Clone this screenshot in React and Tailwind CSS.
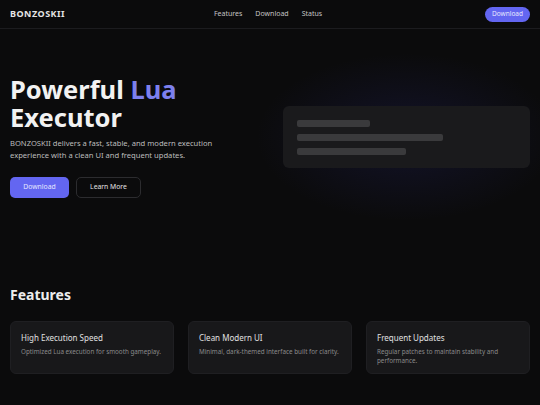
import React from "react";

const features = [
  { title: "High Execution Speed", desc: "Optimized Lua execution for smooth gameplay." },
  { title: "Clean Modern UI", desc: "Minimal, dark-themed interface built for clarity." },
  { title: "Frequent Updates", desc: "Regular patches to maintain stability and performance." },
];

export default function App() {
  return (
    <div className="min-h-[405px] w-[540px] bg-[#0b0b0c] text-white font-['Noto_Sans',sans-serif] antialiased overflow-hidden">
      {/* nav */}
      <header className="h-[29px] flex items-center px-[10px] border-b border-[#1c1c1f]">
        <span className="text-[9px] font-bold tracking-[0.5px] text-[#e5e5e5]">BONZOSKII</span>
        <nav className="flex-1 flex justify-center items-center gap-[13px] text-[7px] text-[#c4c4c4] mr-[14px]">
          <a>Features</a>
          <a>Download</a>
          <a>Status</a>
        </nav>
        <button className="h-[15px] w-[45px] rounded-full bg-[#6366f1] text-[6.5px] text-[#e8e8ff]">
          Download
        </button>
      </header>

      {/* hero */}
      <section className="flex items-center px-[10px] pt-[46px] pb-[86px]">
        <div className="w-[260px] shrink-0">
          <h1 className="text-[25.5px] leading-[28px] font-bold text-[#f2f2f2]">
            Powerful <span className="text-[#7d80ee]">Lua</span>
            <br />
            Executor
          </h1>
          <p className="mt-[6px] text-[7.6px] leading-[12px] text-[#bdbdbd]">
            BONZOSKII delivers a fast, stable, and modern execution
            <br />
            experience with a clean UI and frequent updates.
          </p>
          <div className="mt-[16px] flex gap-[7px]">
            <button className="h-[21px] w-[59px] rounded-[5px] bg-[#6366f1] text-[6.8px] text-[#e6e6ff]">
              Download
            </button>
            <button className="h-[21px] w-[65px] rounded-[5px] border border-[#2c2c2f] text-[6.8px] text-[#e5e5e5]">
              Learn More
            </button>
          </div>
        </div>
        <div className="relative ml-[13px] flex-1">
          <div className="absolute -left-[40px] -right-[40px] -top-[60px] -bottom-[60px] bg-[radial-gradient(ellipse_at_center,rgba(60,60,190,0.16),transparent_65%)]" />
          <div className="relative h-[62px] rounded-[6px] bg-[#1a1a1c] px-[14px] pt-[14px] flex flex-col gap-[7px]">
            <div className="h-[7px] w-[73px] rounded-[2px] bg-[#3a3a3c]" />
            <div className="h-[7px] w-[146px] rounded-[2px] bg-[#3a3a3c]" />
            <div className="h-[7px] w-[109px] rounded-[2px] bg-[#3a3a3c]" />
          </div>
        </div>
      </section>

      {/* features */}
      <section className="px-[10px]">
        <h2 className="text-[14px] font-bold text-[#ededed]">Features</h2>
        <div className="mt-[16px] grid grid-cols-3 gap-[14px]">
          {features.map((f) => (
            <div key={f.title} className="h-[53px] rounded-[6px] bg-[#18181a] border border-[#1f1f22] px-[10px] pt-[10px]">
              <div className="text-[8px] leading-[12px] text-[#e0e0e0]">{f.title}</div>
              <div className="mt-[3px] text-[6.3px] leading-[9px] text-[#8a8a8a]">{f.desc}</div>
            </div>
          ))}
        </div>
      </section>
    </div>
  );
}
